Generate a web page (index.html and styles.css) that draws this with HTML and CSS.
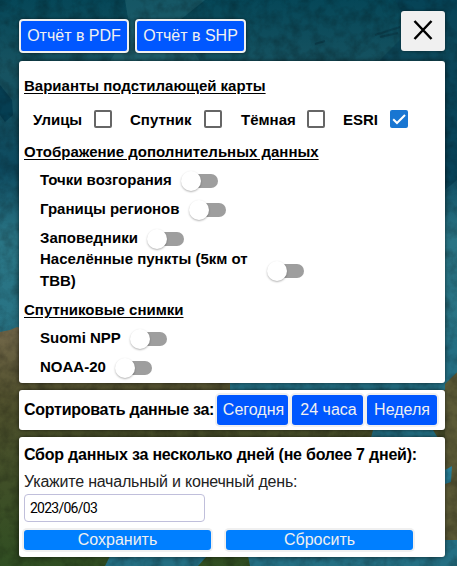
FILE: index.html
```html
<!DOCTYPE html>
<html lang="ru">
<head>
<meta charset="utf-8">
<title>Карта</title>
<link rel="stylesheet" href="styles.css">
</head>
<body>
<svg class="map" viewBox="0 0 457 566" preserveAspectRatio="none" aria-hidden="true">
  <defs>
    <linearGradient id="sea" x1="0" y1="0" x2="0" y2="1">
      <stop offset="0" stop-color="#064758"/>
      <stop offset=".12" stop-color="#175361"/>
      <stop offset=".3" stop-color="#0e4b60"/>
      <stop offset=".42" stop-color="#2a7585"/>
      <stop offset="1" stop-color="#246f83"/>
    </linearGradient>
    <linearGradient id="land" x1="0" y1="0" x2="0" y2="1">
      <stop offset="0" stop-color="#74694b"/>
      <stop offset=".3" stop-color="#50502d"/>
      <stop offset="1" stop-color="#304e22"/>
    </linearGradient>
    <filter id="grain" x="0" y="0" width="100%" height="100%" color-interpolation-filters="sRGB">
      <feTurbulence type="fractalNoise" baseFrequency=".08" numOctaves="4" seed="4" result="n"/>
      <feColorMatrix in="n" type="matrix" values="0 0 0 0 0  0 0 0 0 0  0 0 0 0 0  1.6 0 0 0 -.6"/>
    </filter>
  </defs>
  <rect width="457" height="566" fill="url(#sea)"/>
  <path d="M125 0H205L175 24 200 61H110L130 30Z" fill="#2b6b75" opacity=".45"/>
  <path d="M395 0H457V60H380L410 30Z" fill="#064056" opacity=".5"/>
  <path d="M445 60H457V180L445 190Z" fill="#064056" opacity=".7"/>
  <path d="M0 85L12 100 13 115 5 122 0 115Z" fill="#033a4f" opacity=".8"/>
  <path d="M375 35L400 27M380 37L398 33M315 44L325 41" stroke="#0a3947" stroke-width="2" fill="none" opacity=".7"/>
  <path d="M0 332L10 330 17 327 60 340 230 383V390H457V566H0Z" fill="url(#land)"/>
  <path d="M457 372L445 383V566H457Z" fill="#5b5a36"/>
  <path d="M231 383H446L457 372V340H231ZM231 383L235 390H440L446 383Z" fill="#246f83"/>
  <path d="M373 430H433L438 438H371Z" fill="#246f83"/>
  <path d="M110 556H207L198 566H105ZM248 556H445V540H457V566H250Z" fill="#246f83"/>
  <path d="M445 470L452 466 451 482 445 484Z" fill="#287f98"/>
  <rect width="457" height="566" filter="url(#grain)" opacity=".3"/>
</svg>

<main class="overlay">
  <header class="top">
    <div class="reports">
      <button class="btn report pdf">Отчёт в PDF</button>
      <button class="btn report shp">Отчёт в SHP</button>
    </div>
    <button class="close" aria-label="Закрыть">
      <svg viewBox="0 0 20 20"><path d="M1.5 1L18.5 19M18.5 1L1.5 19"/></svg>
    </button>
  </header>

  <section class="panel layers">
    <h2 class="title">Варианты подстилающей карты</h2>
    <div class="bases">
      <label class="base streets"><span>Улицы</span><i class="box"></i></label>
      <label class="base sat"><span>Спутник</span><i class="box"></i></label>
      <label class="base dark"><span>Тёмная</span><i class="box"></i></label>
      <label class="base esri"><span>ESRI</span><i class="box on"><svg viewBox="0 0 18 18"><path d="M3.2 9.3L7 13 15 5"/></svg></i></label>
    </div>
    <h2 class="title">Отображение дополнительных данных</h2>
    <div class="rows extra">
      <label class="row"><span>Точки возгорания</span><i class="switch"></i></label>
      <label class="row"><span>Границы регионов</span><i class="switch"></i></label>
      <label class="row"><span>Заповедники</span><i class="switch"></i></label>
      <label class="row tall"><span>Населённые пункты (5км от ТВВ)</span><i class="switch"></i></label>
    </div>
    <h2 class="title">Спутниковые снимки</h2>
    <div class="rows images">
      <label class="row"><span>Suomi NPP</span><i class="switch"></i></label>
      <label class="row"><span>NOAA-20</span><i class="switch"></i></label>
    </div>
  </section>

  <section class="panel sort">
    <strong class="sort-label">Сортировать данные за:</strong>
    <div class="periods">
      <button class="btn period">Сегодня</button>
      <button class="btn period">24 часа</button>
      <button class="btn period week">Неделя</button>
    </div>
  </section>

  <section class="panel collect">
    <strong class="collect-title">Сбор данных за несколько дней (не более 7 дней):</strong>
    <p class="hint">Укажите начальный и конечный день:</p>
    <input class="date" value="2023/06/03">
    <div class="actions">
      <button class="btn action">Сохранить</button>
      <button class="btn action">Сбросить</button>
    </div>
  </section>
</main>
</body>
</html>
```
FILE: styles.css
```css
* { box-sizing: border-box; }
body {
  margin: 0;
  width: 457px;
  height: 566px;
  overflow: hidden;
  font: 16px/19px "Liberation Sans", Arial, sans-serif;
  color: #000;
}
.map { position: absolute; inset: 0; width: 457px; height: 566px; z-index: -1; }
.overlay { padding: 11px 12px 9px 19px; }
.top { display: flex; justify-content: space-between; height: 50px; }
.reports { display: flex; gap: 6px; padding-top: 8px; }
.btn {
  padding: 0 0 3px;
  border: 0;
  border-radius: 3px;
  background: #0057ff;
  color: #f0f0f0;
  font: 16px/19px "Liberation Sans", Arial, sans-serif;
  white-space: nowrap;
  box-shadow: 0 0 0 2px #f0f0f0;
}
.report {
  height: 34px;
  padding-bottom: 2px;
  border: 2px solid #f0f0f0;
  border-radius: 4px;
  box-shadow: 0 0 3px rgba(0, 0, 0, .6);
}
.pdf { width: 110px; }
.shp { width: 111px; }
.close {
  width: 44px;
  height: 40px;
  padding: 0 0 3px;
  border: 0;
  border-radius: 3px;
  background: #f0f0f0;
  box-shadow: 0 0 3px rgba(0, 0, 0, .5);
  display: flex;
  align-items: center;
  justify-content: center;
}
.close svg { width: 20px; height: 20px; }
.close path { fill: none; stroke: #000; stroke-width: 2.5; }
.panel {
  background: #fff;
  border-radius: 3px;
  margin-bottom: 7px;
  padding: 0 5px;
  box-shadow: 0 0 4px rgba(0, 0, 0, .6);
}
.layers { height: 322px; padding-top: 15px; }
.title {
  margin: 0;
  height: 20px;
  font-size: 15px;
  line-height: 20px;
  font-weight: 700;
  text-decoration: underline;
  text-underline-offset: 2px;
}
.bases {
  display: flex;
  height: 46px;
  align-items: center;
  padding-left: 9px;
  font-size: 15px;
  font-weight: 700;
}
.base { display: flex; align-items: center; justify-content: space-between; }
.streets { width: 79px; margin-right: 18px; }
.sat { width: 92px; margin-right: 19px; }
.dark { width: 84px; margin-right: 18px; }
.esri { width: 65px; }
.box { width: 18px; height: 18px; border: 2px solid #666; border-radius: 2px; }
.box.on { border: 0; background: #1976d2; }
.box svg { display: block; }
.box path { fill: none; stroke: #fff; stroke-width: 2; }
.rows { padding-left: 16px; }
.row {
  display: flex;
  align-items: center;
  height: 29px;
  gap: 9px;
  font-size: 15px;
  line-height: 22px;
  font-weight: 700;
}
.row.tall { height: 35px; }
.row.tall span { width: 218px; }
.extra { margin-bottom: 13px; padding-top: 3px; }
.images { padding-top: 3px; }
.switch { position: relative; width: 38px; height: 20px; flex: none; display: block; }
.switch::before {
  content: "";
  position: absolute;
  left: 3px; top: 4px;
  width: 34px; height: 14px;
  border-radius: 7px;
  background: #9e9e9e;
}
.switch::after {
  content: "";
  position: absolute;
  left: 0; top: 1px;
  width: 20px; height: 20px;
  border-radius: 50%;
  background: #fff;
  box-shadow: 0 1px 2px rgba(0, 0, 0, .3);
}
.sort { display: flex; align-items: center; height: 40px; }
.sort-label { width: 193px; padding-bottom: 2px; white-space: nowrap; letter-spacing: -.27px; }
.periods { display: flex; gap: 4px; }
.period { width: 71px; height: 30px; padding: 0 0 1px 2px; }
.period.week { width: 70px; padding-left: 0; }
.collect { height: 120px; padding-top: 8px; margin: 0; }
.collect-title { display: block; white-space: nowrap; letter-spacing: -.22px; }
.hint { margin: 8px 0 3px; color: #222; letter-spacing: -.21px; }
.date {
  display: block;
  width: 181px;
  height: 28px;
  padding: 0 5px;
  border: 1px solid #c0bfdb;
  border-radius: 4px;
  background: #fff;
  color: #000;
  font: 14px/20px Roboto, sans-serif;
  letter-spacing: -.75px;
}
.actions { display: flex; gap: 15px; padding-top: 8px; }
.action { width: 187px; height: 20px; background: #007fff; }
```
